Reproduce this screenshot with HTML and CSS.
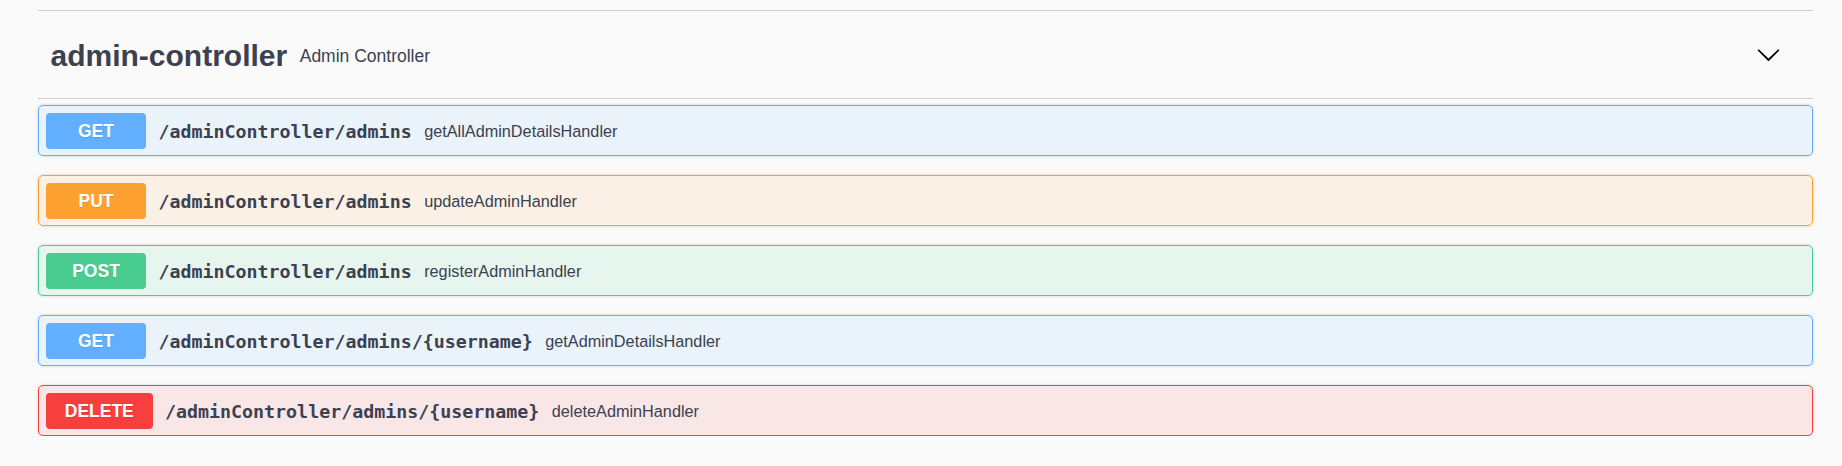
FILE: index.html
```html
<!DOCTYPE html>
<html>
<head>
<meta charset="utf-8">
<link rel="stylesheet" href="styles.css">
</head>
<body>
<div class="wrapper">
  <div class="tag-section">
    <h3 class="tag">
      <span class="tag-name">admin-controller</span>
      <small class="tag-desc">Admin Controller</small>
      <span class="spacer"></span>
      <button class="expand">
        <svg width="25" height="25" viewBox="0 0 20 20"><path d="M17.418 6.109c.272-.268.709-.268.979 0s.271.701 0 .969l-7.908 7.83c-.27.268-.707.268-.979 0l-7.908-7.830c-.27-.268-.27-.701 0-.969.271-.268.709-.268.979 0L10 13.250l7.418-7.141z"/></svg>
      </button>
    </h3>
    <div class="ops">
      <div class="op op-get">
        <span class="method">GET</span>
        <span class="path">/adminController/admins</span>
        <span class="desc">getAllAdminDetailsHandler</span>
      </div>
      <div class="op op-put">
        <span class="method">PUT</span>
        <span class="path">/adminController/admins</span>
        <span class="desc">updateAdminHandler</span>
      </div>
      <div class="op op-post">
        <span class="method">POST</span>
        <span class="path">/adminController/admins</span>
        <span class="desc">registerAdminHandler</span>
      </div>
      <div class="op op-get">
        <span class="method">GET</span>
        <span class="path">/adminController/admins/{username}</span>
        <span class="desc">getAdminDetailsHandler</span>
      </div>
      <div class="op op-delete">
        <span class="method">DELETE</span>
        <span class="path">/adminController/admins/{username}</span>
        <span class="desc">deleteAdminHandler</span>
      </div>
    </div>
  </div>
</div>
</body>
</html>
```

FILE: styles.css
```css
html, body {
  margin: 0;
  padding: 0;
  background: #fafafa;
  font-family: "Liberation Sans", Arial, sans-serif;
  color: #3b4151;
}

.wrapper {
  margin-left: 38px;
  width: 1775px;
  padding-top: 10px;
}

.tag-section {
  border-top: 1px solid #cdcfd3;
}

.tag {
  margin: 0 0 6px 0;
  height: 87px;
  box-sizing: content-box;
  padding: 0 32px 0 12.5px;
  display: flex;
  align-items: center;
  border-bottom: 1px solid #cdcfd3;
  font-weight: bold;
}

.tag-name {
  font-size: 30px;
  font-weight: bold;
  color: #3b4151;
  padding-top: 3px;
}

.tag-desc {
  font-size: 17.5px;
  font-weight: normal;
  padding: 3px 12.5px 0 12.5px;
  color: #3b4151;
}

.spacer {
  flex: 1;
}

.expand {
  border: none;
  background: none;
  padding: 0;
  margin: 0;
  display: flex;
  align-items: center;
}

.expand svg {
  display: block;
  fill: #000;
}

.ops {
  display: flex;
  flex-direction: column;
  gap: 19px;
}

.op {
  display: flex;
  align-items: center;
  height: 51px;
  box-sizing: border-box;
  padding: 7px 7px 6px 7px;
  border: 1px solid;
  border-radius: 5px;
  box-shadow: 0 0 3px rgba(0, 0, 0, 0.19);
}

.method {
  min-width: 100px;
  box-sizing: border-box;
  padding: 7.5px 18.75px;
  line-height: 21px;
  font-size: 17.5px;
  font-weight: bold;
  color: #fff;
  text-align: center;
  border-radius: 4px;
  text-shadow: 0 1px 0 rgba(0, 0, 0, 0.1);
}

.path {
  font-family: "DejaVu Sans Mono", monospace;
  font-weight: bold;
  font-size: 18.3px;
  padding: 0 12.5px;
  color: #3b4151;
}

.desc {
  font-size: 16.25px;
  color: #3b4151;
}

.op-get {
  border-color: #61affe;
  background: rgba(97, 175, 254, 0.1);
}
.op-get .method { background: #61affe; }

.op-put {
  border-color: #fca130;
  background: rgba(252, 161, 48, 0.1);
}
.op-put .method { background: #fca130; }

.op-post {
  border-color: #49cc90;
  background: rgba(73, 204, 144, 0.1);
}
.op-post .method { background: #49cc90; }

.op-delete {
  border-color: #f93e3e;
  background: rgba(249, 62, 62, 0.1);
}
.op-delete .method { background: #f93e3e; }
```
